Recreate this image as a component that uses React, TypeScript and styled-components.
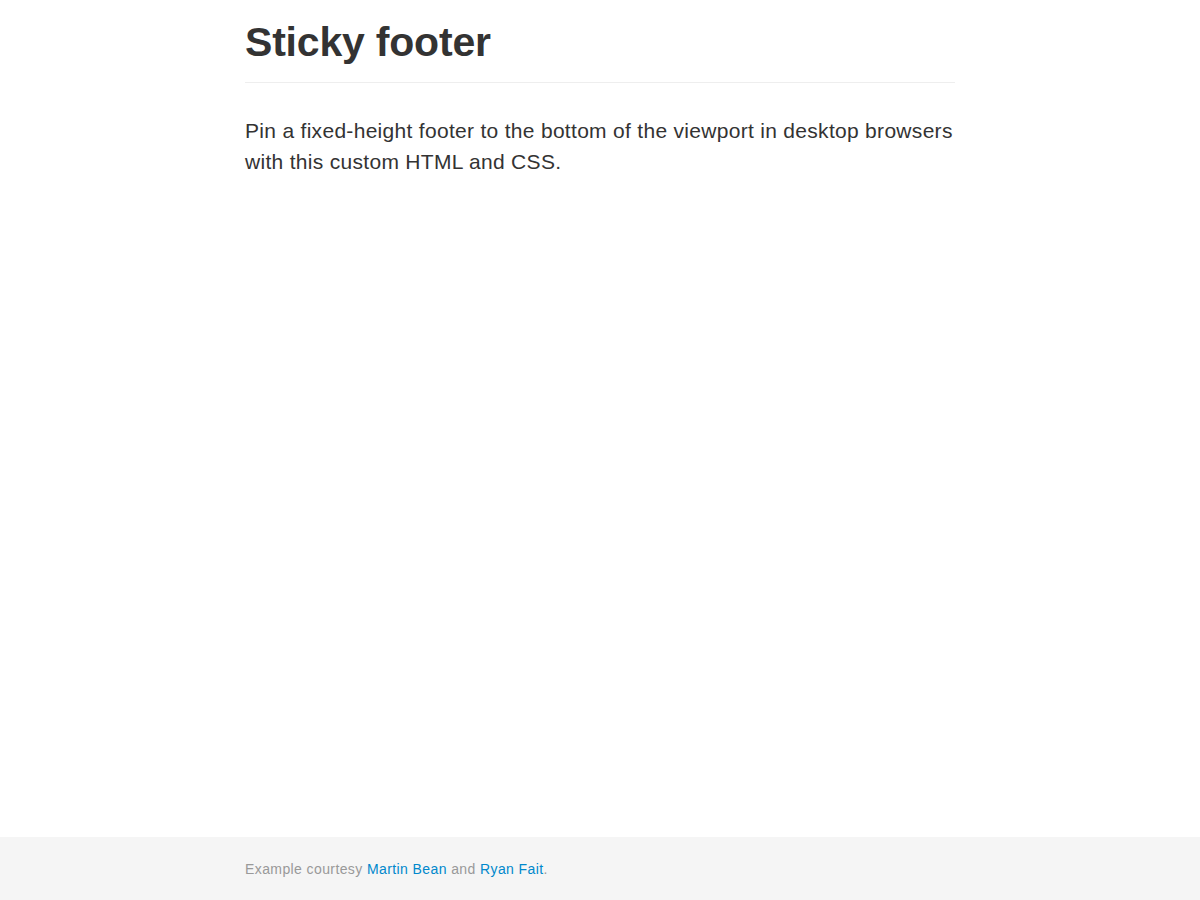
import React from "react";
import styled, { createGlobalStyle } from "styled-components";

const GlobalStyle = createGlobalStyle`
  html, body, #root { height: 100%; }
  body {
    margin: 0;
    background: #ffffff;
    color: #333333;
    font-family: "Liberation Sans", Arial, sans-serif;
    font-size: 14px;
    line-height: 20px;
  }
`;

const Wrap = styled.div`
  min-height: 100vh;
  display: flex;
  flex-direction: column;
`;

const Container = styled.div`
  width: 710px;
  margin: 0 auto;
`;

const Main = styled(Container)`
  flex: 1;
  display: flex;
  flex-direction: column;
`;

const PageHeader = styled.div`
  margin: 21px 0 32px;
  padding-bottom: 19px;
  border-bottom: 1px solid #eeeeee;
`;

const Title = styled.h1`
  margin: 0;
  font-size: 41px;
  line-height: 42px;
  font-weight: 700;
  color: #333333;
  letter-spacing: -0.2px;
`;

const Lead = styled.p`
  margin: 0 0 20px;
  font-size: 21px;
  line-height: 31px;
  font-weight: 400;
  letter-spacing: 0.3px;
  color: #333333;
`;

const Footer = styled.footer`
  height: 63px;
  background: #f5f5f5;
  display: flex;
  align-items: center;
`;

const Credit = styled.p`
  margin: 0;
  color: #999999;
  font-size: 14px;
  line-height: 20px;
  letter-spacing: 0.4px;
`;

const Link = styled.a`
  color: #0088cc;
  text-decoration: none;
`;

export default function App() {
  return (
    <>
      <GlobalStyle />
      <Wrap>
        <Main>
          <PageHeader>
            <Title>Sticky footer</Title>
          </PageHeader>
          <Lead>
            Pin a fixed-height footer to the bottom of the viewport in desktop browsers
            <br />
            with this custom HTML and CSS.
          </Lead>
        </Main>
        <Footer>
          <Container>
            <Credit>
              Example courtesy <Link href="#">Martin Bean</Link> and{" "}
              <Link href="#">Ryan Fait</Link>.
            </Credit>
          </Container>
        </Footer>
      </Wrap>
    </>
  );
}
